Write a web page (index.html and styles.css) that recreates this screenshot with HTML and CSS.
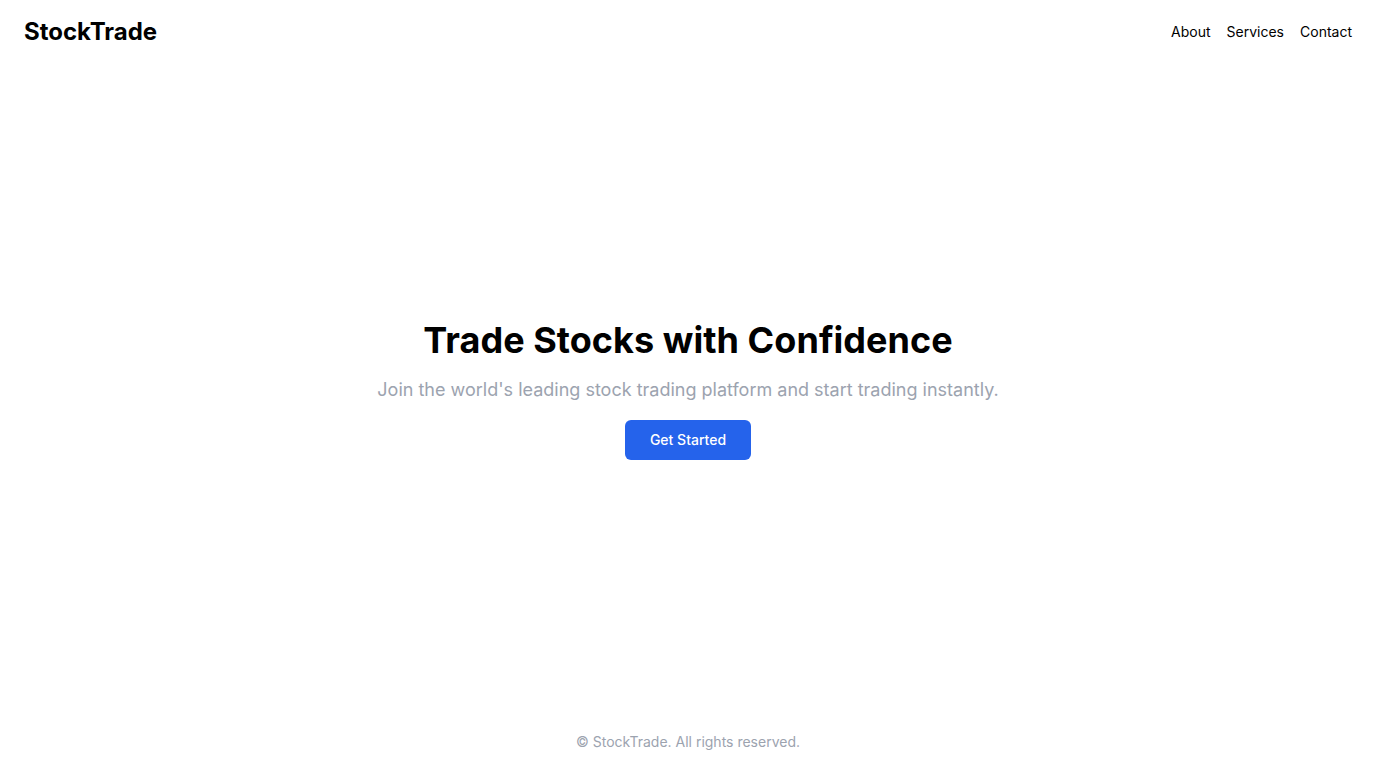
FILE: index.html
```html
<!DOCTYPE html>
<html lang="en">
<head>
<meta charset="utf-8">
<title>StockTrade</title>
<link rel="stylesheet" href="styles.css">
</head>
<body>
<div class="page">
  <header class="header">
    <div class="logo">StockTrade</div>
    <nav class="nav">
      <a href="#">About</a>
      <a href="#">Services</a>
      <a href="#">Contact</a>
    </nav>
  </header>
  <main class="hero">
    <h1 class="title">Trade Stocks with Confidence</h1>
    <p class="subtitle">Join the world's leading stock trading platform and start trading instantly.</p>
    <a class="btn" href="#">Get Started</a>
  </main>
  <footer class="footer">© StockTrade. All rights reserved.</footer>
</div>
</body>
</html>
```

FILE: styles.css
```css
* { box-sizing: border-box; }
html, body { margin: 0; padding: 0; }
body {
  font-family: Inter, "Noto Sans", sans-serif;
  color: #000;
  background: #fff;
}
.page {
  min-height: 100vh;
  display: flex;
  flex-direction: column;
}
.header {
  display: flex;
  justify-content: space-between;
  align-items: center;
  padding: 16px 24px;
}
.logo {
  font-size: 24px;
  line-height: 32px;
  font-weight: 700;
}
.nav {
  display: flex;
  gap: 16px;
}
.nav a {
  color: #000;
  text-decoration: none;
  font-size: 14px;
  line-height: 20px;
}
.hero {
  flex: 1;
  display: flex;
  flex-direction: column;
  align-items: center;
  justify-content: center;
  text-align: center;
}
.title {
  margin: 0 0 16px;
  font-size: 36px;
  line-height: 40px;
  font-weight: 700;
  letter-spacing: 0.05px;
}
.subtitle {
  margin: 0 0 16px;
  font-size: 18px;
  line-height: 28px;
  color: #9ca3af;
}
.btn {
  display: inline-block;
  background: #2563eb;
  color: #fff;
  text-decoration: none;
  font-size: 14px;
  line-height: 24px;
  padding: 8px 25px;
  border-radius: 6px;
  font-weight: 500;
}
.footer {
  padding: 16px;
  text-align: center;
  font-size: 14px;
  line-height: 20px;
  color: #9ca3af;
}
```
